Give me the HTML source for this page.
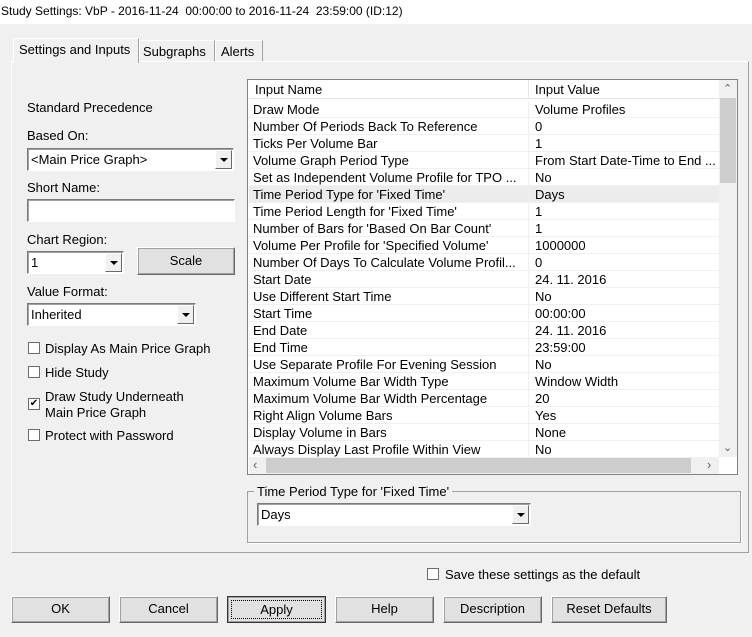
<!DOCTYPE html>
<html><head><style>
*{box-sizing:border-box;margin:0;padding:0}
body{width:752px;height:637px;background:#f0f0f0;font-family:"Liberation Sans",sans-serif;font-size:13px;color:#000;position:relative;overflow:hidden}
.a{position:absolute;white-space:nowrap}
.combo{position:absolute;background:#fff;border:1px solid #7a7a7a;border-right-color:#fff;border-bottom-color:#fff;box-shadow:inset 1px 1px 0 #a0a0a0}
.combo span{position:absolute;left:3px;top:3px}
.dd{position:absolute;right:1px;top:1px;bottom:1px;width:17px;background:#f0f0f0;border:1px solid #fff;border-right-color:#696969;border-bottom-color:#696969}
.dd:after{content:"";position:absolute;left:4px;top:7px;border-left:4px solid transparent;border-right:4px solid transparent;border-top:4px solid #000}
.btn{position:absolute;background:#e1e1e1;border:1px solid #fff;border-right-color:#696969;border-bottom-color:#696969;box-shadow:1px 1px 0 #a0a0a0 inset,-1px -1px 0 #a0a0a0 inset;text-align:center;line-height:24px}
.cb{position:absolute;width:12px;height:12px;background:#fff;border:1px solid #6d6d6d}
.row{position:absolute;left:249px;width:470px;height:17px;border-bottom:1px solid #f0f0f0;background:#fff}
.row span{position:absolute;top:1px}
</style></head><body>
<div class="a" style="left:0;top:0;width:752px;height:24px;background:#fff"></div>
<div class="a" style="left:1px;top:4px;font-size:12px">Study Settings: VbP - 2016-11-24&nbsp; 00:00:00 to 2016-11-24&nbsp; 23:59:00 (ID:12)</div>
<div class="a" style="left:11px;top:61px;width:738px;height:492px;border:1px solid #fff;border-right-color:#a0a0a0;border-bottom-color:#a0a0a0"></div>
<div class="a" style="left:13px;top:38px;width:126px;height:25px;background:#f0f0f0;border:1px solid #fff;border-bottom:none;border-right-color:#a0a0a0"></div>
<div class="a" style="left:19px;top:42px">Settings and Inputs</div>
<div class="a" style="left:139px;top:40px;width:76px;height:21px;border:1px solid #fff;border-bottom:none;border-right-color:#a0a0a0"></div>
<div class="a" style="left:143px;top:44px">Subgraphs</div>
<div class="a" style="left:215px;top:40px;width:48px;height:21px;border:1px solid #fff;border-bottom:none;border-right-color:#a0a0a0"></div>
<div class="a" style="left:221px;top:44px">Alerts</div>
<div class="a" style="left:27px;top:100px">Standard Precedence</div>
<div class="a" style="left:27px;top:128px">Based On:</div>
<div class="combo" style="left:27px;top:148px;width:207px;height:23px"><span>&lt;Main Price Graph&gt;</span><div class="dd"></div></div>
<div class="a" style="left:27px;top:180px">Short Name:</div>
<div class="combo" style="left:27px;top:199px;width:208px;height:23px"></div>
<div class="a" style="left:27px;top:232px">Chart Region:</div>
<div class="combo" style="left:27px;top:251px;width:97px;height:23px"><span>1</span><div class="dd"></div></div>
<div class="btn" style="left:137px;top:247px;width:98px;height:28px;line-height:26px">Scale</div>
<div class="a" style="left:27px;top:284px">Value Format:</div>
<div class="combo" style="left:27px;top:303px;width:169px;height:23px"><span>Inherited</span><div class="dd"></div></div>
<div class="cb" style="left:28px;top:342px"></div><div class="a" style="left:45px;top:341px">Display As Main Price Graph</div>
<div class="cb" style="left:28px;top:366px"></div><div class="a" style="left:45px;top:365px">Hide Study</div>
<div class="cb" style="left:28px;top:398px;font-size:10px;line-height:9px;text-align:center">✔</div><div class="a" style="left:45px;top:389px;line-height:16px">Draw Study Underneath<br>Main Price Graph</div>
<div class="cb" style="left:28px;top:429px"></div><div class="a" style="left:45px;top:428px">Protect with Password</div>
<div class="a" style="left:247px;top:79px;width:491px;height:396px;border:1px solid #828282;background:#fff"></div>
<div class="a" style="left:249px;top:80px;width:470px;height:19px;background:#fff;border-bottom:1px solid #e5e5e5"></div>
<div class="a" style="left:528px;top:80px;width:1px;height:19px;background:#e5e5e5"></div>
<div class="a" style="left:255px;top:82px">Input Name</div>
<div class="a" style="left:535px;top:82px">Input Value</div>
<div id="rows"></div>
<div class="a" style="left:719px;top:80px;width:18px;height:377px;background:#f0f0f0"></div>
<div class="a" style="left:720px;top:98px;width:16px;height:85px;background:#cdcdcd"></div>
<div class="a" style="left:723px;top:82px;font-size:11px;color:#606060">&#8963;</div>
<div class="a" style="left:723px;top:441px;font-size:11px;color:#606060">&#8964;</div>
<div class="a" style="left:249px;top:457px;width:470px;height:17px;background:#f0f0f0"></div>
<div class="a" style="left:266px;top:458px;width:425px;height:15px;background:#cdcdcd"></div>
<div class="a" style="left:253px;top:457px;font-size:13px;color:#606060">&lsaquo;</div>
<div class="a" style="left:707px;top:457px;font-size:13px;color:#606060">&rsaquo;</div>
<div class="a" style="left:247px;top:491px;width:494px;height:52px;border:1px solid #a0a0a0;box-shadow:1px 1px 0 #fff"></div>
<div class="a" style="left:254px;top:484px;background:#f0f0f0;padding:0 3px 0 3px">Time Period Type for 'Fixed Time'</div>
<div class="combo" style="left:257px;top:503px;width:274px;height:23px"><span>Days</span><div class="dd"></div></div>
<div class="cb" style="left:427px;top:568px"></div><div class="a" style="left:445px;top:567px">Save these settings as the default</div>
<div class="btn" style="left:11px;top:596px;width:99px;height:27px">OK</div>
<div class="btn" style="left:119px;top:596px;width:99px;height:27px">Cancel</div>
<div class="btn" style="left:227px;top:596px;width:99px;height:27px;border:1px solid #333"><div style="position:absolute;left:3px;top:3px;right:3px;bottom:3px;border:1px dotted #000;line-height:18px">Apply</div></div>
<div class="btn" style="left:335px;top:596px;width:99px;height:27px">Help</div>
<div class="btn" style="left:443px;top:596px;width:99px;height:27px">Description</div>
<div class="btn" style="left:551px;top:596px;width:116px;height:27px">Reset Defaults</div>
<script>
var d=[["Draw Mode","Volume Profiles"],["Number Of Periods Back To Reference","0"],["Ticks Per Volume Bar","1"],["Volume Graph Period Type","From Start Date-Time to End ..."],["Set as Independent Volume Profile for TPO ...","No"],["Time Period Type for 'Fixed Time'","Days"],["Time Period Length for 'Fixed Time'","1"],["Number of Bars for 'Based On Bar Count'","1"],["Volume Per Profile for 'Specified Volume'","1000000"],["Number Of Days To Calculate Volume Profil...","0"],["Start Date","24. 11. 2016"],["Use Different Start Time","No"],["Start Time","00:00:00"],["End Date","24. 11. 2016"],["End Time","23:59:00"],["Use Separate Profile For Evening Session","No"],["Maximum Volume Bar Width Type","Window Width"],["Maximum Volume Bar Width Percentage","20"],["Right Align Volume Bars","Yes"],["Display Volume in Bars","None"],["Always Display Last Profile Within View","No"]];
var h="";d.forEach(function(r,i){var t=101+17*i;h+='<div class="row" style="top:'+t+'px;'+(i==5?'background:#ececec':'')+'"><span style="left:4px">'+r[0]+'</span><span style="left:286px">'+r[1]+'</span><div style="position:absolute;left:279px;top:0;width:1px;height:17px;background:#f0f0f0"></div></div>';});
document.getElementById("rows").innerHTML=h;
</script>
</body></html>
